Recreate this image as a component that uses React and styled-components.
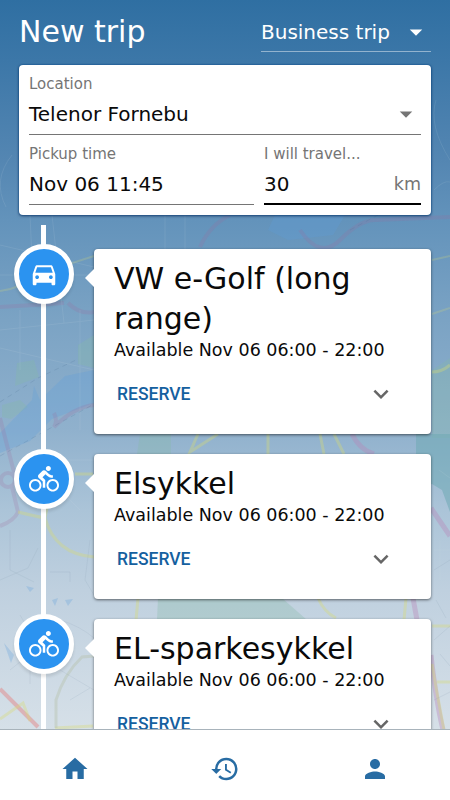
import React from 'react'
import styled, { createGlobalStyle } from 'styled-components'
import {
  MdArrowDropDown,
  MdDirectionsBike,
  MdDirectionsCar,
  MdExpandMore,
  MdHistory,
  MdHome,
  MdPerson,
} from 'react-icons/md'

const GlobalStyle = createGlobalStyle`
  * {
    box-sizing: border-box;
  }

  body {
    margin: 0;
    font-family: 'DejaVu Sans', sans-serif;
    color: #0a0a0a;
  }
`

const Screen = styled.div`
  position: relative;
  display: flex;
  flex-direction: column;
  height: 800px;
  overflow: hidden;
  background: linear-gradient(
    #2f6fa2 0px,
    #3c77a8 60px,
    #5486b2 160px,
    #6393bb 220px,
    #7ba3c4 320px,
    #90b1cd 430px,
    #abc4d8 510px,
    #bfd0df 590px,
    #d6e0e8 730px
  );
`

const MapArt = styled.svg`
  position: absolute;
  top: 0;
  left: 0;
  fill: none;
`

const Header = styled.header`
  position: relative;
  display: flex;
  justify-content: space-between;
  height: 65px;
  padding: 12px 19px 0;
  color: #fff;
`

const Title = styled.h1`
  margin: 0;
  font-size: 30px;
  font-weight: 400;
  line-height: 40px;
`

const TripType = styled.div`
  display: flex;
  align-items: center;
  justify-content: space-between;
  width: 170px;
  height: 40px;
  font-size: 20px;
  border-bottom: 1px solid rgba(255, 255, 255, 0.45);
`

const Arrow = styled(MdArrowDropDown)`
  width: 30px;
  height: 30px;
  flex: none;
`

const Card = styled.section`
  background: #fff;
  border-radius: 4px;
  box-shadow: 0 1px 3px rgba(0, 0, 0, 0.55);
`

const Form = styled(Card)`
  position: relative;
  display: grid;
  grid-template-columns: 225px 157px;
  grid-template-rows: 70px 70px;
  column-gap: 10px;
  height: 150px;
  margin: 0 19px;
  padding: 0 10px;
  box-shadow: 0 0 2px #004a8c, 0 1px 3px rgba(0, 20, 60, 0.6);
`

const Field = styled.div`
  display: flex;
  flex-direction: column;
  height: 70px;
  grid-column: ${({ $wide }) => ($wide ? '1 / 3' : 'auto')};
`

const Label = styled.label`
  padding-top: 9px;
  font-size: 15px;
  line-height: 20px;
  color: #757575;
`

const Value = styled.div`
  display: flex;
  align-items: center;
  justify-content: space-between;
  height: 41px;
  padding-bottom: ${({ $active }) => ($active ? '0' : '1px')};
  font-size: 20px;
  border-bottom: ${({ $active }) => ($active ? '2px solid #000' : '1px solid #757575')};

  svg {
    color: #757575;
  }
`

const Unit = styled.span`
  font-size: 17.5px;
  color: #757575;
`

const Timeline = styled.main`
  position: relative;
  flex: 1;
  min-height: 0;
  overflow: hidden;
  margin-top: 10px;
  padding: 24px 19px 0 14px;

  &:before {
    content: '';
    position: absolute;
    top: 0;
    bottom: 0;
    left: 41px;
    width: 5px;
    background: #fff;
  }
`

const Entry = styled.div`
  position: relative;
  display: flex;
  align-items: flex-start;
  gap: 20px;
  margin-bottom: 20px;
`

const Badge = styled.div`
  display: flex;
  align-items: center;
  justify-content: center;
  flex: none;
  width: 60px;
  height: 60px;
  margin-top: -5px;
  border: 5px solid #fff;
  border-radius: 50%;
  background: #2b93f0;
  color: #fff;
  box-shadow: 0 3px 3px rgba(0, 0, 0, 0.1);

  svg {
    width: 30px;
    height: 30px;
  }
`

const VehicleCard = styled(Card)`
  position: relative;
  flex: 1;
  padding: 10px 20px 18px;

  &:before {
    content: '';
    position: absolute;
    top: 20px;
    left: -9px;
    border: solid transparent;
    border-width: 9px 9px 9px 0;
    border-right-color: #fff;
  }
`

const Name = styled.h2`
  margin: 0;
  font-size: 30px;
  font-weight: 400;
  line-height: 40px;
`

const Available = styled.p`
  margin: 0;
  font-size: 17.5px;
  line-height: 23px;
`

const Actions = styled.div`
  display: flex;
  align-items: center;
  justify-content: space-between;
  height: 44px;
  margin-top: 10px;
  padding: 0 15px 0 3px;
  color: #666;

  svg {
    width: 30px;
    height: 30px;
  }
`

const Reserve = styled.button`
  padding: 0;
  border: 0;
  background: none;
  font: 500 17.5px Roboto, sans-serif;
  color: #15609f;
`

const BottomNav = styled.nav`
  position: relative;
  display: grid;
  grid-template-columns: repeat(3, 1fr);
  place-items: center;
  height: 71px;
  padding-top: 8px;
  flex: none;
  background: #fff;
  border-top: 1px solid #a8b3bb;
  color: #286ca3;

  svg {
    width: 30px;
    height: 30px;
  }
`

const vehicles = [
  { name: 'VW e-Golf (long range)', icon: MdDirectionsCar },
  { name: 'Elsykkel', icon: MdDirectionsBike },
  { name: 'EL-sparkesykkel', icon: MdDirectionsBike },
]

function Map() {
  return (
    <MapArt width="450" height="730">
      {/* parks */}
      <g fill="#86bba6" opacity="0.3">
        <path d="M17 363l17-3 5 17-24 9zM78 345l16-10v33l-16-4zM2 405l18-5 8 7-17 12-9-2z" />
        <path d="M140 434h31v22l-34-2zM432 370l18-12v80h-18z" />
        <path d="M158 598h124l25 22H157z" />
      </g>
      <path d="M416 434h34v78l-8-22-10-6-16 4z" fill="#6fa9b5" opacity="0.55" />
      {/* water */}
      <g fill="#5f9fdb" opacity="0.28">
        <path d="M0 433l32-33 2-14 6 14 25-24 29-6v33l-42 16-22 22-30 12zM275 215h70l-12 20-45 5-20-10z" />
        <path d="M26 586l8 2-4 4zM52 600l6-2-3 8zM65 600l8-1-5 7zM4 643l10 12-3 8z" />
      </g>
      {/* main roads */}
      <g stroke="#a06a9c" strokeWidth="4" opacity="0.2">
        <path d="M0 307l34-2 30-2M68 303q12 12 26 9M0 418l16 62M200 247q10-22 30-32M300 230q20 30 40 10t35-20l75-3" />
        <circle cx="8" cy="480" r="7" />
        <path d="M0 526q14-5 18-14l-6-25M54 413q4 8 0 14 20-20 40-22" />
      </g>
      <g stroke="#b887b8" strokeWidth="5" opacity="0.38">
        <path d="M352 434q8 16 22 20M431 508l19 28M413 598l4 22M431 655q5 46 12 75" />
      </g>
      <path d="M0 689l38 38" stroke="#e57f7f" strokeWidth="4" opacity="0.45" />
      {/* secondary roads */}
      <g stroke="#d9dc72" strokeWidth="3" opacity="0.35">
        <path d="M18 512q16 4 27 6 10 36 49 39M45 518l2-10M75 474h18" />
        <path d="M138 598l-2 22M198 434l-8 18 28-18M268 434v20M320 434l4 20M334 434l10 20M318 598q6 14 18 20M406 598l-2 22" />
        <path d="M432 372q10 0 18-7M432 626h18M432 664q4 24 12 66M437 682h13" />
        <path d="M0 719l23-16 7 18M55 728l38-2" />
      </g>
      <path
        d="M0 291q20-2 32-15l62-20M432 260l18-4M432 314l18-6"
        stroke="#d9dc72"
        strokeWidth="2"
        opacity="0.22"
      />
      <path d="M56 728v-28q8-26 26-43l12-1" stroke="#b9c3af" strokeWidth="3" opacity="0.45" />
      {/* streets */}
      <g stroke="#dce7ed" opacity="0.1">
        <path d="M0 245l94 22M0 330l94-10M30 215l4 88M52 215l12 108M0 275h94M80 310v120M0 348l94 22M20 310v60M165 215v34M185 215v34M60 460h34M50 480l30 30" />
        <path d="M12 155q-20 25-6 52M436 100q-8 25 14 60M434 190q10-10 16-8M439 470l11 8M434 550h16M440 540v40" />
      </g>
      <g stroke="#7f98aa" opacity="0.14">
        <path d="M0 580l28-12 10-20M10 530v40l24 12M20 615l12 20-16 15M50 572h20v10M90 540l-5 40 9 15M60 620q20 6 34 18M10 670l20-16v30M60 670l34 20M70 700l20-12" />
        <path d="M434 640l16-14M440 654l10 12M436 600l10 18M434 570l16-10M434 700l16-8" />
      </g>
      <path d="M0 402l38-24 38-18M0 456l94-52M350 230l28-15" stroke="#4a6c91" strokeDasharray="5 4" opacity="0.2" />
    </MapArt>
  )
}

export default function App() {
  return (
    <Screen>
      <GlobalStyle />
      <Map />
      <Header>
        <Title>New trip</Title>
        <TripType>
          Business trip <Arrow />
        </TripType>
      </Header>
      <Form>
        <Field $wide>
          <Label>Location</Label>
          <Value>
            Telenor Fornebu <Arrow />
          </Value>
        </Field>
        <Field>
          <Label>Pickup time</Label>
          <Value>Nov 06 11:45</Value>
        </Field>
        <Field>
          <Label>I will travel...</Label>
          <Value $active>
            30 <Unit>km</Unit>
          </Value>
        </Field>
      </Form>
      <Timeline>
        {vehicles.map(({ name, icon: Icon }) => (
          <Entry key={name}>
            <Badge>
              <Icon />
            </Badge>
            <VehicleCard>
              <Name>{name}</Name>
              <Available>Available Nov 06 06:00 - 22:00</Available>
              <Actions>
                <Reserve>RESERVE</Reserve>
                <MdExpandMore />
              </Actions>
            </VehicleCard>
          </Entry>
        ))}
      </Timeline>
      <BottomNav>
        <MdHome />
        <MdHistory />
        <MdPerson />
      </BottomNav>
    </Screen>
  )
}
